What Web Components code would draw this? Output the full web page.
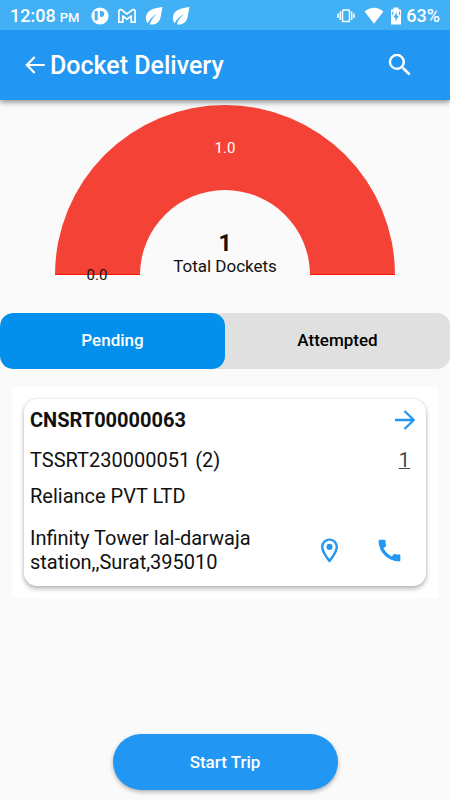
<!DOCTYPE html>
<html lang="en">
<head>
<meta charset="utf-8">
<meta name="viewport" content="width=device-width, initial-scale=1">
<title>Docket Delivery</title>
<style>
html, body { margin: 0; background: #fafafa; }
body { font-family: Roboto, "Liberation Sans", sans-serif; color: #111; }
</style>
</head>
<body>
<docket-screen>
  <status-bar slot="top" time="12:08" meridiem="PM" battery="63%"></status-bar>
  <app-bar slot="top">Docket Delivery</app-bar>
  <docket-gauge total="1" done="0.0" pending="1.0">Total Dockets</docket-gauge>
  <docket-tabs></docket-tabs>
  <docket-card>
    <span slot="code">CNSRT00000063</span>
    <span slot="ref">TSSRT230000051 (2)</span>
    <span slot="count">1</span>
    <span slot="client">Reliance PVT LTD</span>
    <span slot="address">Infinity Tower lal-darwaja station,,Surat,395010</span>
  </docket-card>
  <pill-button slot="bottom">Start Trip</pill-button>
</docket-screen>

<script>
const BASE = `<style>
*,:host{box-sizing:border-box}
:host{display:block}
button{font:inherit;color:inherit;background:none;border:0;padding:0;margin:0;cursor:pointer}
a{color:inherit}
svg{display:block}
</style>`;

function define(name, markup) {
  customElements.define(name, class extends HTMLElement {
    constructor() {
      super();
      const tpl = document.createElement('template');
      tpl.innerHTML = BASE + (typeof markup === 'function' ? markup(this) : markup);
      this.attachShadow({ mode: 'open' }).append(tpl.content.cloneNode(true));
    }
  });
}

define('docket-screen', `<style>
:host{display:flex;flex-direction:column;min-height:100vh}
header{position:relative;z-index:1;box-shadow:0 2px 4px rgba(0,0,0,.28),0 4px 6px rgba(0,0,0,.14)}
main{flex:1}
footer{padding-bottom:10px}
</style>
<header><slot name="top"></slot></header>
<main><slot></slot></main>
<footer><slot name="bottom"></slot></footer>`);

define('status-bar', el => `<style>
:host{display:flex;align-items:center;justify-content:space-between;height:30px;padding:1px 10px 0;background:#42b0f5;color:#fff;font-size:18px;font-weight:500}
.group{display:flex;align-items:center}
small{font-size:13px;margin-left:4px}
.notes{gap:9px;margin-left:12px}
.vibrate{margin-right:9px}
.wifi{margin-right:6px}
.battery{margin-left:4px}
</style>
<div class="group">
  <span>${el.getAttribute('time')}<small>${el.getAttribute('meridiem')}</small></span>
  <div class="group notes" aria-hidden="true">
    <svg width="18" height="18" viewBox="0 0 18 18"><circle cx="9" cy="9" r="8.6" fill="#fff"/><rect x="3.700" y="4" width="3" height="9.600" rx=".5" fill="#42b0f5"/><path d="M9 4h1.200a3 3 0 0 1 0 6Q9 10 9 8.500z" fill="#42b0f5"/></svg>
    <svg width="18" height="18" viewBox="0 0 18 18" fill="none" stroke="#fff" stroke-width="1.700" stroke-linejoin="round"><path d="M.9 15.200V4.300Q.9 2.700 2.400 2.700h1L9 7l5.600-4.300h1q1.500 0 1.500 1.600v10.900h-3.900V9L9 12.200 4.800 9v6.200z"/></svg>
    <svg width="18" height="18" viewBox="0 0 18 18"><path d="M17.600 0C12 1 4.500 1.600 1.800 7c-1.700 3.500-.8 7 .8 9.200C5 12 8 9 12 7 8.700 9.700 6 13 4.800 17.300c5.500 1 9.100-1.500 10.600-6.300C16.600 7 16.400 3.500 17.600 0z" fill="#fff"/></svg>
    <svg width="18" height="18" viewBox="0 0 18 18"><path d="M17.600 0C12 1 4.500 1.600 1.800 7c-1.700 3.500-.8 7 .8 9.200C5 12 8 9 12 7 8.700 9.700 6 13 4.800 17.300c5.500 1 9.100-1.500 10.600-6.300C16.600 7 16.400 3.500 17.600 0z" fill="#fff"/></svg>
  </div>
</div>
<div class="group">
  <svg class="vibrate" width="18" height="18" viewBox="0 0 18 18" fill="none" stroke="#fff" stroke-width="1.500" aria-hidden="true"><rect x="5.500" y="3" width="7" height="11.500" rx=".8"/><path d="M3.300 4.500v8.500M14.700 4.500v8.500M1 6.500v4.500M17 6.500v4.500"/></svg>
  <svg class="wifi" width="20" height="18" viewBox="0 0 20 18" aria-hidden="true"><path d="M.6 4.500Q10-3 19.400 4.500L10 16.700z" fill="#fff"/></svg>
  <svg width="12" height="18" viewBox="0 0 12 18" aria-hidden="true"><path d="M3.500.5h5v2H11v15H1v-15h2.500z" fill="#fff"/><path d="M6.800 5L3.300 10.500h2.200V14.500L8.900 8.700H6.800z" fill="#42b0f5"/><path d="M2.700 8V4.500M9.500 4.500V8" stroke="#42b0f5"/></svg>
  <span class="battery">${el.getAttribute('battery')}</span>
</div>`);

define('app-bar', `<style>
:host{display:flex;align-items:center;height:70px;padding:0 35px 0 22px;background:#2196f3;color:#fff}
h1{flex:1;margin:0;padding:2px 0 0 2px;font-size:25px;line-height:32px;font-weight:500}
</style>
<button aria-label="Back"><svg width="26" height="26" viewBox="0 0 24 24"><path fill="currentColor" d="M21 11H6.830l5.590-5.590L11 4l-8 8 8 8 1.410-1.410L6.830 13H21z"/></svg></button>
<h1><slot></slot></h1>
<button aria-label="Search"><svg width="30" height="30" viewBox="0 0 24 24"><path fill="currentColor" d="M15.500 14h-.79l-.28-.27A6.471 6.471 0 0 0 16 9.500 6.500 6.500 0 1 0 9.500 16c1.610 0 3.090-.59 4.230-1.570l.27.28v.79l5 4.990L20.490 19l-4.990-5zm-6 0C7.010 14 5 11.990 5 9.500S7.010 5 9.500 5 14 7.010 14 9.500 11.990 14 9.500 14z"/></svg></button>`);

define('docket-gauge', el => `<style>
:host{padding:5px 20px 0}
svg{width:100%;max-width:340px;margin:0 auto;overflow:visible}
text{text-anchor:middle;font-size:15px;fill:#111}
</style>
<svg viewBox="0 0 340 184" role="img" aria-label="Total dockets">
  <path d="M0 170A170 170 0 0 1 340 170H255A85 85 0 0 0 85 170Z" fill="#f44336"/>
  <path d="M0 169.500H85M255 169.500H340" stroke="#ff1208"/>
  <text x="170" y="48" style="fill:#fff">${el.getAttribute('pending')}</text>
  <text x="42" y="175">${el.getAttribute('done')}</text>
  <text x="170" y="146" style="font-size:23px;font-weight:700">${el.getAttribute('total')}</text>
  <text x="170" y="167" style="font-size:17px">${el.textContent.trim()}</text>
</svg>`);

define('docket-tabs', `<style>
:host{margin-top:24px}
div{display:flex;background:#e0e0e0;border-radius:13px;overflow:hidden}
button{flex:1;height:56px;padding-bottom:3px;border-radius:13px;font-size:17px;font-weight:500;color:#000}
button[aria-selected=true]{background:#0390ec;color:#fff}
</style>
<div role="tablist"><button role="tab" aria-selected="true">Pending</button><button role="tab" aria-selected="false">Attempted</button></div>`);

define('docket-card', `<style>
:host{margin:18px 12px 0;padding:12px;background:#fff}
article{display:grid;grid-template-columns:1fr auto;align-items:center;padding:5px 7px 12px 6px;border-radius:13px;background:#fff;box-shadow:0 3px 5px rgba(0,0,0,.26),0 0 3px rgba(0,0,0,.12);font-size:20px;line-height:24px}
h2{margin:0;font-size:20px;line-height:32px;font-weight:700}
.blue{color:#2196f3}
.open{justify-self:end}
.ref{padding:12px 0}
.count{justify-self:end;padding-right:9px;color:#444;text-decoration-thickness:1px}
.client{grid-column:1/-1}
.address{margin-top:18px;padding-right:40px}
.actions{display:flex;align-items:center;gap:31px;margin-top:18px;padding-right:15px}
</style>
<article>
  <h2><slot name="code"></slot></h2>
  <button class="blue open" aria-label="Open docket"><svg width="28" height="28" viewBox="0 0 28 28" fill="none" stroke="currentColor" stroke-width="2.300"><path d="M4 14H23M13.500 5L22.700 14L13.500 23"/></svg></button>
  <div class="ref"><slot name="ref"></slot></div>
  <a class="count" href="#"><slot name="count"></slot></a>
  <div class="client"><slot name="client"></slot></div>
  <div class="address"><slot name="address"></slot></div>
  <div class="actions blue">
    <button aria-label="Show on map"><svg width="29" height="29" viewBox="0 0 24 24" fill="currentColor"><path d="M12 2C8.130 2 5 5.130 5 9c0 5.250 7 13 7 13s7-7.750 7-13c0-3.870-3.130-7-7-7zM7 9c0-2.760 2.240-5 5-5s5 2.240 5 5c0 2.880-2.880 7.190-5 9.880C9.920 16.210 7 11.850 7 9z"/><circle cx="12" cy="9" r="2.500"/></svg></button>
    <button aria-label="Call"><svg width="29" height="29" viewBox="0 0 24 24" fill="currentColor"><path d="M20.010 15.380c-1.230 0-2.420-.2-3.530-.56a.977.977 0 0 0-1.010.24l-1.570 1.970c-2.830-1.350-5.480-3.900-6.890-6.830l1.950-1.660c.27-.28.35-.67.24-1.020-.37-1.110-.56-2.300-.56-3.530 0-.54-.45-.99-.99-.99H4.190C3.650 3 3 3.240 3 3.990 3 13.280 10.730 21 20.010 21c.71 0 .99-.63.99-1.180v-3.450c0-.54-.45-.99-.99-.99z"/></svg></button>
  </div>
</article>`);

define('pill-button', `<style>
button{display:block;width:50%;height:56px;margin:0 auto;border-radius:28px;background:#2196f3;color:#fff;font-size:17px;font-weight:500;box-shadow:0 2px 4px rgba(0,0,0,.3)}
</style>
<button><slot></slot></button>`);
</script>
</body>
</html>
